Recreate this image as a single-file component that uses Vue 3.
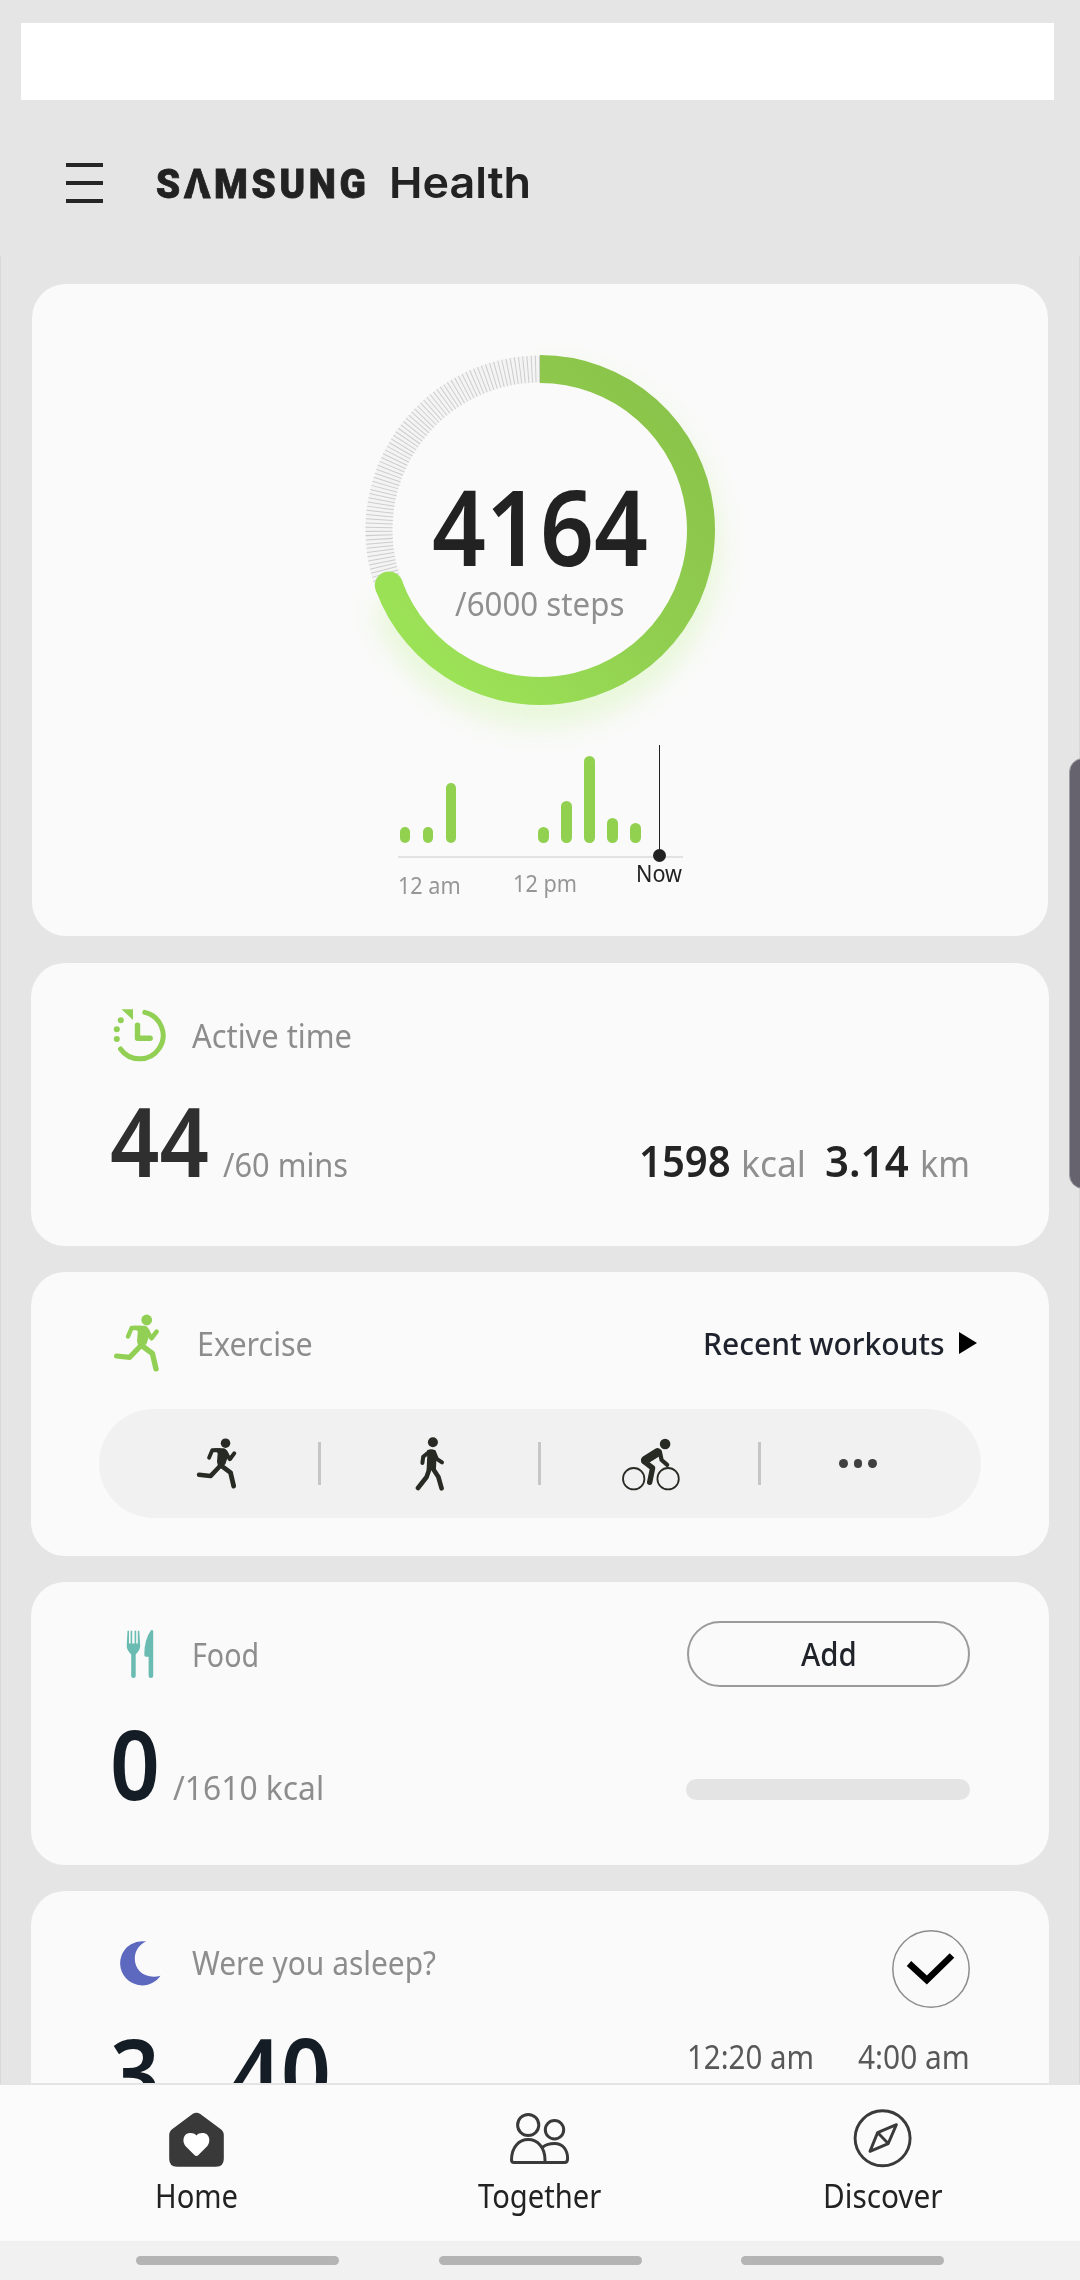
<template>
    <div class="phone">
        <svg class="sprite" width="0" height="0">
            <symbol id="runner" viewBox="0 0 54 60">
                <circle cx="34.7" cy="7" r="5.4" fill="currentColor" />
                <path d="M21 12.8 L33 12.8 Q36.4 14 38.4 19 L34.5 31 L27 36 L25 28 L25.8 18.5 Z" fill="currentColor" />
                <g fill="none" stroke="currentColor" stroke-linecap="round" stroke-linejoin="round">
                    <path d="M28 15 L19.6 15 L16 23.5" stroke-width="4.4" />
                    <path d="M34 17 L39.6 25.2 L44.6 18.6" stroke-width="4.6" />
                    <path d="M29 32 L40.4 40.5 L44 55.8" stroke-width="5.4" />
                    <path d="M28.5 33 L17.6 44.4 L4.6 43" stroke-width="5.2" />
                </g>
            </symbol>
        </svg>

        <div class="status-box"></div>
        <header class="header">
            <div class="menu"><i></i><i></i><i></i></div>
            <h1 class="brand">
                <span v-fit="214" class="brand-name">S<span class="brand-a">A</span>MSUNG</span>
                <span v-fit="142" class="brand-app">Health</span>
            </h1>
        </header>

        <main class="cards">
            <section class="card steps">
                <div class="ring">
                    <svg class="ring-svg" width="400" height="400" viewBox="0 0 400 400">
                        <defs>
                            <linearGradient id="ringFill" x1="0.85" y1="0.1" x2="0.1" y2="0.85">
                                <stop offset="0" stop-color="#8bc44a" />
                                <stop offset="0.5" stop-color="#91cf50" />
                                <stop offset="1" stop-color="#9ce257" />
                            </linearGradient>
                            <filter id="glow" x="-30%" y="-30%" width="160%" height="160%">
                                <feGaussianBlur stdDeviation="15" />
                            </filter>
                        </defs>
                        <path :d="arc" class="glow" filter="url(#glow)" transform="translate(0 17)" />
                        <circle :cx="C" :cy="C" r="148" fill="#fafafa" />
                        <path :d="rest" class="rest-base" />
                        <path :d="rest" class="rest-ticks" />
                        <path :d="arc" fill="none" stroke="url(#ringFill)" stroke-width="28" />
                        <circle :cx="end.x" :cy="end.y" r="14" fill="#9be156" />
                    </svg>
                    <div class="ring-text">
                        <span v-fit="216" class="ring-count">{{ steps }}</span>
                        <span v-fit="169" class="ring-goal">/{{ goal }} steps</span>
                    </div>
                </div>
                <div class="chart">
                    <div class="bars">
                        <i v-for="(h, i) in bars" :key="i" class="bar" :style="{ height: h + 'px' }"></i>
                    </div>
                    <div class="now"></div>
                    <span v-fit="63" class="tick am">12 am</span>
                    <span v-fit="64" class="tick pm">12 pm</span>
                    <span v-fit="46" class="tick now-label">Now</span>
                </div>
            </section>

            <section class="card active">
                <div class="head">
                    <svg class="icon green" width="54" height="60" viewBox="0 0 54 60">
                        <path d="M32.8 7.4 A23.5 23.5 0 1 1 8.5 44" fill="none" stroke="currentColor" stroke-width="5" stroke-linecap="round" />
                        <path d="M25.5 20.3 V33.2 H38.2" fill="none" stroke="currentColor" stroke-width="5.4" stroke-linecap="round" stroke-linejoin="round" />
                        <path d="M9.5 4.2 H21 V15 Z" fill="currentColor" />
                        <circle cx="8.8" cy="15.3" r="3" fill="currentColor" />
                        <circle cx="4.8" cy="24.3" r="3" fill="currentColor" />
                        <circle cx="4.8" cy="34" r="3" fill="currentColor" />
                    </svg>
                    <span v-fit="160" class="label">Active time</span>
                </div>
                <div class="figures">
                    <div>
                        <span v-fit="99" class="big soft">44</span>
                        <span v-fit="125" class="unit">/60 mins</span>
                    </div>
                    <div class="totals">
                        <span v-fit="92" class="num">1598</span>
                        <span v-fit="65" class="of">kcal</span>
                        <span v-fit="84" class="num second">3.14</span>
                        <span v-fit="50" class="of">km</span>
                    </div>
                </div>
            </section>

            <section class="card exercise">
                <div class="head">
                    <svg class="icon green" width="54" height="60"><use href="#runner" /></svg>
                    <span v-fit="116" class="label">Exercise</span>
                    <div class="recent">
                        <span v-fit="242">Recent workouts</span>
                        <svg width="18" height="22" viewBox="0 0 18 22"><path d="M0 0 L18 11 L0 22 Z" fill="#000" /></svg>
                    </div>
                </div>
                <div class="workouts">
                    <div class="workout run">
                        <svg width="47.5" height="52.8"><use href="#runner" /></svg>
                    </div>
                    <i class="divider"></i>
                    <div class="workout">
                        <svg width="50" height="54" viewBox="0 0 50 54">
                            <circle cx="27.9" cy="5.3" r="5" fill="currentColor" />
                            <path d="M22 13.5 Q26 11 30.4 13.5 L31.6 19 L30.9 33 H21.6 L22.2 20 Z" fill="currentColor" />
                            <g fill="none" stroke="currentColor" stroke-width="4" stroke-linecap="round" stroke-linejoin="round">
                                <path d="M24 15 L18.2 19.8 L17.4 26" />
                                <path d="M29 15 L31.8 21.8 L37 25.4" />
                                <path d="M24.4 32 L21.6 40 L13 51" stroke-width="4.6" />
                                <path d="M28.2 32 L33.4 40 L36.6 51.3" stroke-width="4.6" />
                            </g>
                        </svg>
                    </div>
                    <i class="divider"></i>
                    <div class="workout bike">
                        <svg width="58" height="54" viewBox="0 0 58 54">
                            <circle cx="11.7" cy="41.7" r="10.7" class="wheel" />
                            <circle cx="46.1" cy="41.7" r="10.7" class="wheel" />
                            <circle cx="43.1" cy="7" r="5.3" fill="currentColor" />
                            <g fill="none" stroke="currentColor" stroke-linecap="round" stroke-linejoin="round">
                                <path d="M23.2 23.2 L35.6 15.4" stroke-width="8.6" />
                                <path d="M38 15.5 L39.6 23 L45.2 27.8" stroke-width="4.2" />
                                <path d="M22.3 24.6 L30.6 31 L27.7 45.3" stroke-width="5.4" />
                            </g>
                        </svg>
                    </div>
                    <i class="divider"></i>
                    <div class="workout more"><i></i><i></i><i></i></div>
                </div>
            </section>

            <section class="card food">
                <div class="head">
                    <svg class="icon teal" width="54" height="60" viewBox="0 0 54 60">
                        <path d="M14.7 22 L15.5 6.8 H17 V19.5 H18.6 V6.8 H20.2 V19.5 H22.6 V6.8 H24.2 V19.5 H25.8 V6.8 H27.3 L28.2 22 Q28.2 26 23.7 30.5 V52 Q23.7 54 21.5 54 Q19.2 54 19.2 52 V30.5 Q14.7 26 14.7 22 Z" fill="currentColor" />
                        <path d="M41.2 7.5 Q41.2 5.5 39 6.2 Q32.3 15 32.3 31 Q32.3 32.8 34 32.8 H36.6 V52 Q36.6 54 38.9 54 Q41.2 54 41.2 52 Z" fill="currentColor" />
                    </svg>
                    <span v-fit="67" class="label">Food</span>
                    <button class="add"><span v-fit="56">Add</span></button>
                </div>
                <div class="figures">
                    <div>
                        <span v-fit="50" class="big">0</span>
                        <span v-fit="151" class="unit food-unit">/1610 kcal</span>
                    </div>
                    <div class="progress"></div>
                </div>
            </section>

            <section class="card sleep">
                <div class="head">
                    <svg class="icon indigo" width="54" height="60" viewBox="0 0 54 60">
                        <path d="M34.3 8.6 A22.1 22.1 0 1 0 48.5 42.8 C34 46.5 22.4 38 22.8 25 C23 17.5 28 11 34.3 8.6 Z" fill="currentColor" />
                    </svg>
                    <span v-fit="244" class="label">Were you asleep?</span>
                    <svg class="check" width="78" height="78" viewBox="0 0 78 78">
                        <circle cx="39" cy="39" r="38.2" fill="none" stroke="#8d8d8d" stroke-width="1.5" />
                        <path d="M17 33.5 L34.8 50 L60 25.5" fill="none" stroke="#000" stroke-width="6.5" />
                    </svg>
                </div>
                <div class="figures">
                    <div>
                        <span v-fit="50" class="big">3</span>
                        <span v-fit="100" class="big minutes">40</span>
                    </div>
                    <div class="times">
                        <span v-fit="127">12:20 am</span>
                        <span v-fit="112">4:00 am</span>
                    </div>
                </div>
            </section>
        </main>

        <nav class="tabs">
            <div class="tab">
                <svg width="55" height="60" viewBox="0 0 55 60">
                    <path d="M23.5 5 Q27.4 2.4 31.3 5 L51.5 20 Q54.8 22.4 54.8 26 V50 Q54.8 57.7 47 57.7 H8 Q0.2 57.7 0.2 50 V26 Q0.2 22.4 3.4 20 Z" fill="#393939" />
                    <path d="M27.4 26.6 C30 23.4 34.8 23.6 37.8 25.2 C41 28 41.2 33.4 38.4 37 L29.4 46 Q27.4 48 25.4 46 L16.4 37 C13.6 33.4 13.8 28 17 25.2 C20 23.6 24.8 23.4 27.4 26.6 Z" fill="#fff" />
                </svg>
                <span v-fit="83">Home</span>
            </div>
            <div class="tab">
                <svg width="60" height="60" viewBox="0 0 60 60" fill="none" stroke="#3a3a3a" stroke-width="3">
                    <circle cx="18.2" cy="16" r="10.6" />
                    <circle cx="44.5" cy="20.7" r="9.2" />
                    <path d="M4 53.6 Q1.5 53.6 1.5 51 C1.5 38 9 30.6 18.2 30.6 S35 38 35 51 V53.6 Z" stroke-linejoin="round" />
                    <path d="M32.5 38.2 Q37.5 34.6 44.5 34.6 C53 34.6 57.6 41 57.6 49.5 Q57.6 53.6 54.5 53.6 H34" />
                </svg>
                <span v-fit="123">Together</span>
            </div>
            <div class="tab">
                <svg width="60" height="60" viewBox="0 0 60 60" fill="none" stroke="#3a3a3a" stroke-width="2.9" stroke-linejoin="round">
                    <circle cx="29.6" cy="29.3" r="27.5" />
                    <path d="M43.4 15.6 L24.6 23.6 L17 42.4 L35.2 34.6 Z M24.6 23.6 L35.2 34.6" />
                </svg>
                <span v-fit="120">Discover</span>
            </div>
        </nav>
        <div class="gestures"><i></i><i></i><i></i></div>

        <div class="edge-line left"></div>
        <div class="edge-line right"></div>
        <div class="edge-handle"></div>
    </div>
</template>

<script setup>
const steps = 4164;
const goal = 6000;
// one entry per two hours, 0 means no steps
const bars = [16, 16, 60, 0, 0, 0, 16, 42, 87, 25, 20];

const C = 200;
const R = 161;
const angle = (steps / goal) * Math.PI * 2;
const end = {
    x: C + R * Math.sin(angle),
    y: C - R * Math.cos(angle)
};
const arc = `M${C} ${C - R} A${R} ${R} 0 1 1 ${end.x} ${end.y}`;
const rest = `M${C} ${C - R} A${R} ${R} 0 0 0 ${end.x} ${end.y}`;

// squeezes a text to the given width
const vFit = {
    mounted(el, { value }) {
        const width = el.offsetWidth;
        el.style.transform = `scaleX(${value / width})`;
        el.style.marginRight = `${value - width}px`;
    }
};
</script>

<style>
body {
    margin: 0;
    background: #e5e5e5;
}
</style>

<style scoped>
.phone {
    position: relative;
    display: flex;
    flex-direction: column;
    width: 1080px;
    height: 2280px;
    overflow: hidden;
    background: #e5e5e5;
    font-family: "Noto Sans", "Open Sans", sans-serif;
    color: #222;
}

.phone span {
    display: inline-block;
    flex: none;
    white-space: nowrap;
    transform-origin: 0 50%;
}

.sprite {
    position: absolute;
}

.status-box {
    flex: none;
    width: 1033px;
    height: 77px;
    margin: 23px 0 0 21px;
    background: #fff;
}

.header {
    flex: none;
    display: flex;
    align-items: center;
    height: 166px;
    padding-left: 66px;
    margin-bottom: 18px;
}

.menu {
    display: flex;
    flex-direction: column;
    gap: 14px;
    width: 37px;
    margin-right: 53px;
}

.menu i {
    height: 4px;
    background: #262626;
}

.brand {
    display: flex;
    align-items: baseline;
    gap: 19px;
    margin: 0;
    line-height: 50px;
}

.brand-name {
    font: 900 41.5px/50px Roboto, sans-serif;
    letter-spacing: 4px;
    -webkit-text-stroke: 0.8px #222;
}

.brand-a {
    position: relative;
}

.brand-a::after {
    content: "";
    position: absolute;
    left: 8px;
    bottom: 9px;
    width: 12px;
    height: 23px;
    background: #e5e5e5;
    clip-path: polygon(50% 0, 100% 100%, 0 100%);
}

.brand-app {
    font: 600 43px/50px Inter, sans-serif;
}

.cards {
    flex: 1;
    min-height: 0;
    overflow: hidden;
    display: flex;
    flex-direction: column;
    gap: 26px;
}

.card {
    flex: none;
    box-sizing: border-box;
    width: 1018px;
    height: 284px;
    margin-left: 31px;
    padding: 0 79px 0 81px;
    border-radius: 34px;
    background: #fafafa;
}

.steps {
    width: 1016px;
    height: 652px;
    margin-left: 32px;
    padding: 45.5px 0 0;
    margin-bottom: 1px;
}

.ring {
    display: grid;
    width: 400px;
    height: 400px;
    margin: 0 auto;
}

.ring-svg,
.ring-text {
    grid-area: 1 / 1;
}

.ring-svg {
    overflow: visible;
}

.glow {
    fill: none;
    stroke: #a4ec5c;
    stroke-width: 30;
    opacity: 0.26;
}

.rest-base {
    fill: none;
    stroke: #f4f4f4;
    stroke-width: 27;
}

.rest-ticks {
    fill: none;
    stroke: #cdcdcd;
    stroke-width: 27;
    stroke-dasharray: 1 2.9;
}

.ring-text {
    display: flex;
    flex-direction: column;
    align-items: center;
    padding-top: 144px;
}

.ring-count {
    font-size: 104px;
    font-weight: 600;
    line-height: 104px;
}

.ring-goal {
    margin-top: 10px;
    font-size: 32px;
    line-height: 32px;
    color: #8f8f8f;
}

.chart {
    position: relative;
    width: 285px;
    height: 129px;
    margin: 10.5px 0 0 366px;
}

.bars {
    display: flex;
    align-items: flex-end;
    gap: 12.6px;
    box-sizing: border-box;
    height: 118px;
    padding: 0 0 13px 1.5px;
    border-bottom: 2px solid #e2e2e2;
}

.bar {
    width: 10.5px;
    border-radius: 6px;
    background: #92d050;
}

.now {
    position: absolute;
    left: 260.7px;
    top: 5px;
    width: 1.6px;
    height: 110px;
    background: #222;
}

.now::after {
    content: "";
    position: absolute;
    left: -5.7px;
    bottom: -7px;
    width: 13px;
    height: 13px;
    border-radius: 50%;
    background: #222;
}

.tick {
    position: absolute;
    font-size: 23px;
    line-height: 24px;
    color: #969696;
}

.am {
    left: 0;
    top: 133px;
}

.pm {
    left: 115px;
    top: 131px;
}

.now-label {
    left: 238px;
    top: 121px;
    color: #222;
}

.head {
    display: flex;
    align-items: center;
    height: 60px;
}

.icon {
    flex: none;
    margin-right: 25.5px;
}

.green {
    color: #92cf55;
}

.teal {
    color: #6abcb2;
}

.indigo {
    color: #5c69bf;
}

.label,
.unit {
    font-size: 32px;
    line-height: 32px;
    color: #8d8d8d;
}

.label {
    padding-top: 1px;
}

.figures {
    display: flex;
    justify-content: space-between;
    align-items: baseline;
    white-space: nowrap;
    font-size: 0;
}

.big {
    margin-left: -2px;
    font-size: 96px;
    font-weight: 600;
    line-height: 96px;
    color: #141d26;
}

.soft {
    color: #2f2f2f;
}

.unit {
    position: relative;
    left: 14px;
}

.active {
    padding-top: 42px;
    height: 283px;
}

.active .figures {
    margin-top: 27px;
}

.totals {
    display: flex;
    align-items: baseline;
}

.num {
    font-size: 44px;
    font-weight: 600;
    line-height: 44px;
    color: #242424;
}

.of {
    margin-left: 11px;
    font-size: 36px;
    line-height: 36px;
    color: #8f8f8f;
}

.second {
    margin-left: 19px;
}

.exercise {
    padding-top: 41px;
}

.exercise .label {
    margin-left: 5px;
}

.recent {
    display: flex;
    align-items: center;
    gap: 14px;
    margin-left: auto;
    margin-right: -7px;
    font-size: 31.5px;
    line-height: 32px;
    font-weight: 550;
    color: #1e222c;
}

.workouts {
    display: grid;
    grid-template-columns: 219px 3px 217px 3px 217px 3px 1fr;
    align-items: center;
    width: 882px;
    height: 109px;
    margin: 36px 0 0 -13px;
    border-radius: 55px;
    background: #f1f1f1;
    color: #282a24;
}

.workout {
    display: flex;
    justify-content: center;
    align-items: center;
}

.run {
    padding-left: 20px;
}

.bike {
    padding-left: 3px;
}

.wheel {
    fill: none;
    stroke: currentColor;
    stroke-width: 1.8;
}

.divider {
    height: 43px;
    background: #c6c6c6;
}

.more {
    gap: 6px;
    padding-right: 26px;
}

.more i {
    width: 8.8px;
    height: 8.8px;
    border-radius: 50%;
    background: #404040;
}

.food {
    padding-top: 39px;
    height: 283px;
}

.food .head {
    height: 66px;
}

.food .figures {
    margin-top: 28px;
}

.food-unit {
    left: 13.5px;
}

.add {
    display: flex;
    justify-content: center;
    align-items: center;
    box-sizing: border-box;
    width: 283px;
    height: 66px;
    margin-left: auto;
    padding: 0;
    border: 2px solid #9b9b9b;
    border-radius: 33px;
    background: none;
    font: 550 32px/32px "Noto Sans", sans-serif;
    color: #20242a;
}

.progress {
    width: 284px;
    height: 21px;
    border-radius: 10.5px;
    background: #e4e4e4;
}

.sleep {
    padding-top: 39px;
}

.sleep .head {
    height: 65px;
}

.check {
    align-self: flex-start;
    flex: none;
    margin-left: auto;
}

.sleep .figures {
    margin-top: 28px;
    align-items: flex-start;
}

.minutes {
    margin-left: 71px;
}

.times {
    display: flex;
    gap: 44px;
    margin-top: 18px;
    font-size: 32px;
    line-height: 32px;
    color: #585858;
}

.tabs {
    flex: none;
    box-sizing: border-box;
    display: grid;
    grid-template-columns: repeat(3, 343px);
    height: 158px;
    padding: 24px 0 0 25px;
    border-top: 2px solid #e4e4e4;
    background: #fbfbfb;
}

.tab {
    display: flex;
    flex-direction: column;
    align-items: center;
    font-size: 32px;
    line-height: 40px;
    color: #222;
}

.tab span {
    margin-top: 7px;
}

.gestures {
    flex: none;
    box-sizing: border-box;
    display: flex;
    gap: 99.5px;
    height: 39px;
    padding: 15px 0 0 136px;
    background: #f1f1f1;
}

.gestures i {
    width: 203px;
    height: 9px;
    border-radius: 5px;
    background: #b4b4b4;
}

.edge-line {
    position: absolute;
    top: 256px;
    width: 1px;
    height: 1828px;
    background: #d8d8d8;
}

.left {
    left: 0;
}

.right {
    right: 0;
}

.edge-handle {
    position: absolute;
    top: 758px;
    right: -17px;
    width: 26px;
    height: 429px;
    border: 1px solid #a09ea5;
    border-radius: 14px;
    background: #66636e;
}
</style>
